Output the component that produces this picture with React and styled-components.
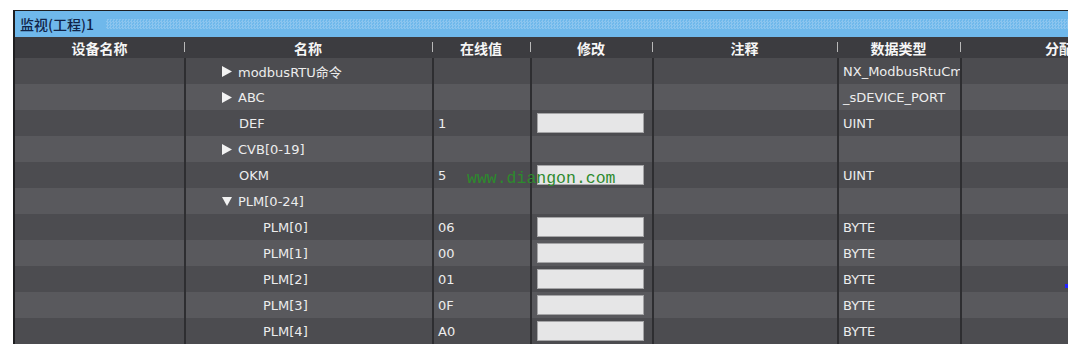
import React from "react";
import styled, { createGlobalStyle } from "styled-components";

const GlobalStyle = createGlobalStyle`
  body {
    margin: 0;
    background: #fff;
    font-family: "DejaVu Sans", "Noto Sans CJK SC", sans-serif;
  }
`;

const COLS = "169px 248px 98px 122px 185px 123px 108px";

const rows = [
  { name: "modbusRTU命令", level: 1, arrow: "right", value: "", edit: false, type: "NX_ModbusRtuCmd" },
  { name: "ABC", level: 1, arrow: "right", value: "", edit: false, type: "_sDEVICE_PORT" },
  { name: "DEF", level: 1, value: "1", edit: true, type: "UINT" },
  { name: "CVB[0-19]", level: 1, arrow: "right", value: "", edit: false, type: "" },
  { name: "OKM", level: 1, value: "5", edit: true, type: "UINT" },
  { name: "PLM[0-24]", level: 1, arrow: "down", value: "", edit: false, type: "" },
  { name: "PLM[0]", level: 2, value: "06", edit: true, type: "BYTE" },
  { name: "PLM[1]", level: 2, value: "00", edit: true, type: "BYTE" },
  { name: "PLM[2]", level: 2, value: "01", edit: true, type: "BYTE" },
  { name: "PLM[3]", level: 2, value: "0F", edit: true, type: "BYTE" },
  { name: "PLM[4]", level: 2, value: "A0", edit: true, type: "BYTE" },
];

const headers = ["设备名称", "名称", "在线值", "修改", "注释", "数据类型", "分配到"];

const Arrow = ({ dir }) => (
  <svg width="10" height="11" viewBox="0 0 10 11" style={{ flex: "none" }}>
    {dir === "down" ? (
      <polygon points="0,1 10,1 5,10" fill="#f2f2f2" />
    ) : (
      <polygon points="0,0 10,5.5 0,11" fill="#f2f2f2" />
    )}
  </svg>
);

const App = () => {
  return (
    <>
      <GlobalStyle />
      <Page>
        <Panel>
          <TitleBar>
            <TitleText>监视(工程)1</TitleText>
            <Dots />
          </TitleBar>
          <HeaderRow>
            {headers.map((h, i) => (
              <HeaderCell key={h} $first={i === 0} $last={i === headers.length - 1}>
                {h}
              </HeaderCell>
            ))}
          </HeaderRow>
          {rows.map((r, i) => (
            <Row key={r.name} $alt={i % 2 === 1}>
              <Cell $first />
              <NameCell $level={r.level} $arrow={!!r.arrow}>
                {r.arrow && <Arrow dir={r.arrow} />}
                <span>{r.name}</span>
              </NameCell>
              <Cell>{r.value}</Cell>
              <Cell>{r.edit && <EditBox />}</Cell>
              <Cell />
              <Cell>{r.type}</Cell>
              <Cell />
            </Row>
          ))}
          <Watermark>www.diangon.com</Watermark>
          <BlueDot />
        </Panel>
      </Page>
    </>
  );
};

export default App;

const Page = styled.div`
  padding: 10px 0 0 13px;
  height: 346px;
  overflow: hidden;
`;

const Panel = styled.div`
  position: relative;
  width: 1055px;
  border-left: 2px solid #1e1e20;
  border-top: 1px solid #1e1e20;
  box-sizing: border-box;
  overflow: hidden;
`;

const TitleBar = styled.div`
  display: flex;
  align-items: center;
  height: 26px;
  background: #6fb8eb;
  padding-left: 5px;
  gap: 12px;
`;

const TitleText = styled.div`
  font-family: "Noto Sans CJK SC", sans-serif;
  font-size: 14px;
  font-weight: 500;
  color: #112448;
  white-space: nowrap;
`;

const Dots = styled.div`
  flex: 1;
  height: 10px;
  background-image: repeating-conic-gradient(#8cc5ef 0 25%, transparent 0 50%);
  background-size: 3px 3px;
`;

const HeaderRow = styled.div`
  display: grid;
  grid-template-columns: ${COLS};
  height: 21px;
  background: #3c3c40;
`;

const HeaderCell = styled.div`
  position: relative;
  display: flex;
  align-items: center;
  justify-content: ${(p) => (p.$last ? "flex-start" : "center")};
  padding-left: ${(p) => (p.$last ? "85px" : "0")};
  font-family: "Noto Sans CJK SC", sans-serif;
  font-size: 14px;
  font-weight: bold;
  color: #f6f6f6;
  white-space: nowrap;
  overflow: hidden;
  &::before {
    content: "";
    display: ${(p) => (p.$first ? "none" : "block")};
    position: absolute;
    left: 0;
    top: 5px;
    width: 1px;
    height: 10px;
    background: #b8b8b8;
  }
`;

const Row = styled.div`
  display: grid;
  grid-template-columns: ${COLS};
  height: 26px;
  background: ${(p) => (p.$alt ? "#59595d" : "#4c4c50")};
`;

const Cell = styled.div`
  display: flex;
  align-items: center;
  box-sizing: border-box;
  border-left: ${(p) => (p.$first ? "none" : "2px solid #2e2e31")};
  padding-left: 4px;
  font-size: 13px;
  color: #ededed;
  white-space: nowrap;
  overflow: hidden;
`;

const NameCell = styled(Cell)`
  gap: 6px;
  padding-left: ${(p) => (p.$level === 2 ? 77 : p.$arrow ? 36 : 53)}px;
`;

const EditBox = styled.div`
  width: 107px;
  height: 20px;
  margin-left: 1px;
  box-sizing: border-box;
  background: #e6e6e7;
  border: 1px solid #a4a4a6;
`;

const Watermark = styled.div`
  position: absolute;
  left: 452px;
  top: 158px;
  font-family: "Liberation Mono", monospace;
  font-size: 16.5px;
  color: #2d8a2d;
  white-space: nowrap;
  pointer-events: none;
`;

const BlueDot = styled.div`
  position: absolute;
  left: 1050px;
  top: 273px;
  width: 3px;
  height: 4px;
  background: #2222ff;
`;
